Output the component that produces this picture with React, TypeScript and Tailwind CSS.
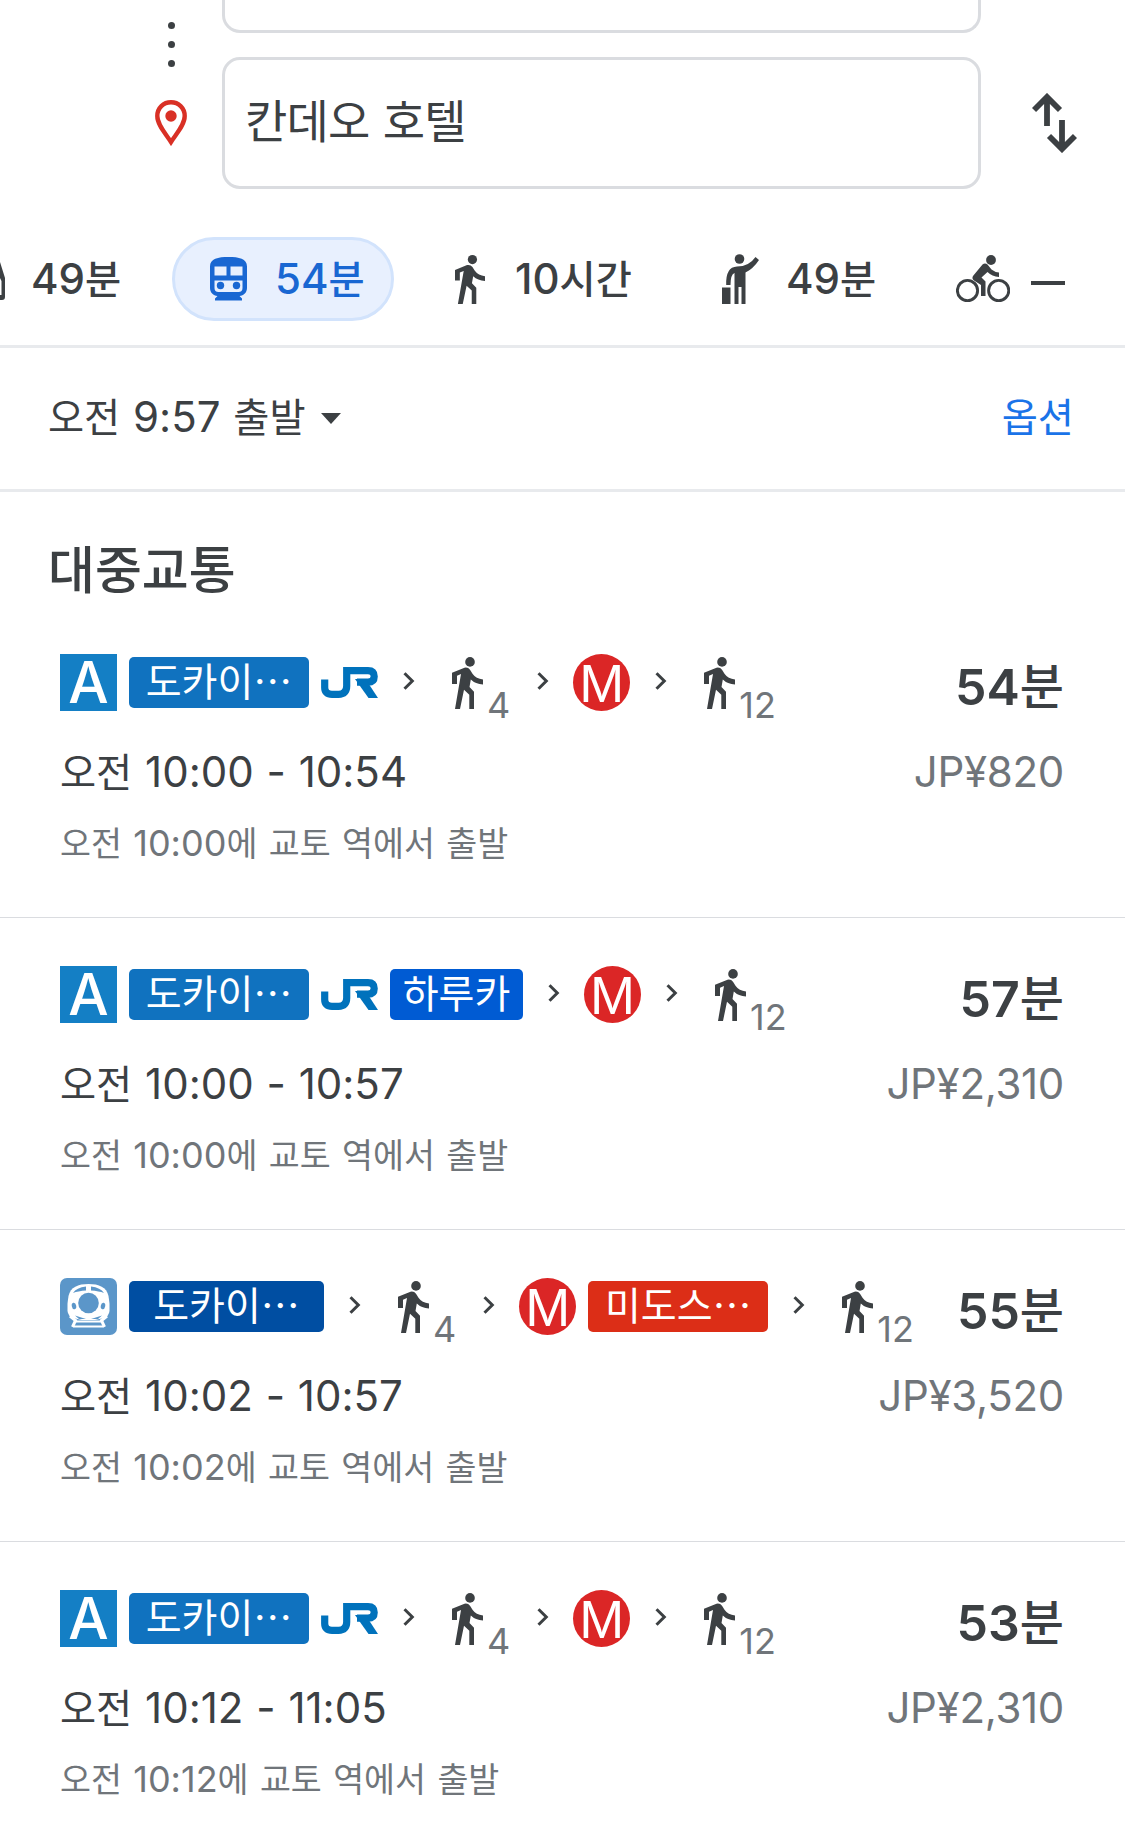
import React from 'react';

interface Badge {
  kind: 'a' | 'jr' | 'metro' | 'train' | 'chip' | 'walk' | 'next';
  label?: string;
  className?: string;
}

interface Route {
  steps: Badge[];
  duration: string;
  start: string;
  end: string;
  fare: string;
}

// Hangul is set a little smaller than the digits beside it
const Ko = ({ children }: { children: React.ReactNode }) => <span className="text-[0.935em]">{children}</span>;

const WalkIcon = ({ className }: { className: string }) => (
  <svg viewBox="0 0 31 51" preserveAspectRatio="none" fill="currentColor" className={className}>
    <circle cx="18" cy="4.8" r="4.8" />
    <path d="M0 15.5 L12.5 10.5 Q16 9.8 18 12.5 L20.5 16.5 Q24 21.5 31 22 V27 Q23.5 26.5 18.8 22 L17.5 29.5 L22 34 V51 H17.3 V37 L12 32 L8 51 H3 L9 16.7 L5 18.3 V26.5 H0 Z" />
  </svg>
);

const TrainIcon = () => (
  <svg viewBox="0 0 37 44" className="h-[44px] w-[37px] shrink-0" fill="none">
    <path fill="#1967d2" fillRule="evenodd" d="M18.500 0C8 0 0 1.500 0 9.500V31c0 4.500 3.300 7.500 7.500 8L5 41.500V43.500H32V41.500L29.500 39c4.200-.5 7.500-3.500 7.500-8V9.500C37 1.500 29 0 18.500 0ZM4.500 9.500V18.500H16.500V9.500ZM20.500 9.500V18.500H32.500V9.500ZM4.500 23.500V31q0 4 4 4H28.500q4 0 4-4V23.500Z" />
    <circle cx="10.500" cy="28.500" r="3.700" fill="#1967d2" />
    <circle cx="26.500" cy="28.500" r="3.700" fill="#1967d2" />
  </svg>
);

const HailIcon = () => (
  <svg viewBox="0 0 37 50" className="h-[50px] w-[37px] shrink-0" fill="currentColor">
    <circle cx="17.500" cy="5" r="4.800" />
    <path d="M33.500 3L37 6Q31 15 23.500 18.500V50H19.500V33H16.500V50H12.500V19Q8.500 20.500 8.500 31H4.200Q3.500 13 15 12.500Q27 12.500 33.500 3Z" />
    <path d="M0 33.500H8.500V50H0Z" />
  </svg>
);

const BikeIcon = () => (
  <svg viewBox="0 0 54 48" className="h-[48px] w-[54px] shrink-0" fill="currentColor">
    <circle cx="35" cy="5" r="4.900" />
    <circle cx="11.500" cy="35.500" r="10.100" fill="none" stroke="currentColor" strokeWidth="2.900" />
    <circle cx="42.700" cy="35.500" r="10.100" fill="none" stroke="currentColor" strokeWidth="2.900" />
    <path d="M17 21L26.500 9.500Q29 7.500 31.500 9.500L35.500 14.500Q38.500 17 43 17.500V22Q36 21.500 31.500 17L25.500 22.500L29.500 26.500V41H25V30L18 25.500Q15.500 23.500 17 21Z" />
  </svg>
);

const SwapIcon = () => (
  <svg viewBox="0 0 45 60" className="h-[60px] w-[45px]" fill="none" stroke="currentColor" strokeWidth="5.800">
    <path d="M15 33V4M2 17L15 4L28 17" />
    <path d="M30 27V56M17 43L30 56L43 43" />
  </svg>
);

const PinIcon = () => (
  <svg viewBox="0 0 32 46" className="h-[46px] w-[32px]" fill="none">
    <path d="M16 2.300C8.500 2.300 2.300 8 2.300 16C2.300 25 11 34 16 42C21 34 29.700 25 29.700 16C29.700 8 23.500 2.300 16 2.300Z" stroke="#d93025" strokeWidth="4.400" />
    <circle cx="16" cy="16" r="5.700" fill="#d93025" />
  </svg>
);

const JrLogo = () => (
  <svg viewBox="0 0 57 31" className="h-[31px] w-[57px] shrink-0" fill="none">
    <path stroke="#0072bc" strokeWidth="7.200" d="M3.700 12.500V20.500Q3.700 27.300 11 27.300H17.500Q25.700 27.300 25.700 19V3.600H47Q53.200 3.600 53.200 9.500Q53.200 15.200 47 15.200H36" />
    <path fill="#0072bc" d="M34 12H44.500L57 31H47.500Z" />
  </svg>
);

const ExpressIcon = () => (
  <svg viewBox="0 0 57 57" className="size-[57px] shrink-0">
    <rect width="57" height="57" rx="7" fill="#5b96c9" />
    <path fill="#fff" d="M28.500 6C18 6 10.500 9 8.500 18Q7 25 7.500 33Q8 38 13 40L22 42H35L44 40Q49 38 49.500 33Q50 25 48.500 18C46.500 9 39 6 28.500 6Z" />
    <circle cx="28.500" cy="25" r="10.300" fill="#5b96c9" />
    <path fill="#5b96c9" d="M26 8.500V12.500Q18 13 13 15Q16.500 9.500 26 8.500ZM31 8.500V12.500Q39 13 44 15Q40.500 9.500 31 8.500Z" />
    <ellipse cx="14" cy="28" rx="2.200" ry="3.300" fill="#5b96c9" transform="rotate(-12 14 28)" />
    <ellipse cx="43" cy="28" rx="2.200" ry="3.300" fill="#5b96c9" transform="rotate(12 43 28)" />
    <path fill="#5b96c9" d="M15 37.500L26 41H19ZM42 37.500L31 41H38Z" />
    <path d="M10 38L15.500 42.500L12.500 49M47 38L41.500 42.500L44.500 49" fill="none" stroke="#fff" strokeWidth="3" />
    <path d="M15 43.500H42M14 48.500H43" stroke="#fff" strokeWidth="2.200" />
  </svg>
);

const Step = ({ kind, label, className = '' }: Badge) => {
  if (kind === 'a') {
    return (
      <span className="flex size-[57px] shrink-0 items-center justify-center bg-[#147fc5] text-[57px] leading-none font-medium text-white">
        A
      </span>
    );
  }
  if (kind === 'metro') {
    return (
      <span className="flex size-[57px] shrink-0 items-center justify-center rounded-full bg-[#db2626] font-['Liberation_Sans',sans-serif] text-[54px] leading-none text-white">
        M
      </span>
    );
  }
  if (kind === 'jr') return <JrLogo />;
  if (kind === 'train') return <ExpressIcon />;
  if (kind === 'next') {
    return (
      <svg viewBox="0 0 12 18" className="-mt-1 mr-3 ml-[13px] h-[18px] w-[12px] shrink-0" fill="none" stroke="#3c4043" strokeWidth="3">
        <path d="M1.500 1.200L9.300 9L1.500 16.800" />
      </svg>
    );
  }
  if (kind === 'walk') {
    return (
      <span className="flex h-[57px] shrink-0 items-start pr-[2px] pl-[13px]">
        <WalkIcon className="mt-[3px] h-[52px] w-[31px]" />
        <span className="mt-[33px] ml-[4px] text-[36px] leading-[36px] text-[#70757a]">{label}</span>
      </span>
    );
  }
  return (
    <span className={`flex h-[51px] shrink-0 items-center justify-center rounded-[5px] text-[39px] leading-none text-white ${className}`}>
      <span className="-mt-[3px]">{label}</span>
    </span>
  );
};

const RouteCard = ({ route }: { route: Route }) => (
  <li className="h-[312px] border-b border-[#dadce0] pt-[48px] pr-[61px] pl-[60px]">
    <div className="flex h-[57px] items-center justify-between">
      <div className="flex items-center gap-3">
        {route.steps.map((step, i) => (
          <Step key={i} {...step} />
        ))}
      </div>
      <div className="mt-2 flex items-center text-[50px] leading-none font-semibold">
        {route.duration}
        <span className="text-[48px] font-medium">분</span>
      </div>
    </div>
    <div className="mt-[36px] flex h-[50px] items-center justify-between text-[42px] leading-none">
      <span className="[word-spacing:1px]">
        <Ko>오전</Ko> {route.start} - {route.end}
      </span>
      <span className="tracking-[-0.3px] text-[#70757a]">JP¥{route.fare}</span>
    </div>
    <p className="mt-[24px] h-[44px] text-[36px] leading-[44px] text-[#70757a] [word-spacing:1.2px]">
      <Ko>오전</Ko> {route.start}
      <Ko>에</Ko> <Ko>교토</Ko> <Ko>역에서</Ko> <Ko>출발</Ko>
    </p>
  </li>
);

const tokaido = { kind: 'chip', label: '도카이⋯', className: 'w-[180px] bg-[#1072bf]' } as Badge;

const localSteps: Badge[] = [
  { kind: 'a' },
  tokaido,
  { kind: 'jr' },
  { kind: 'next' },
  { kind: 'walk', label: '4' },
  { kind: 'next' },
  { kind: 'metro' },
  { kind: 'next' },
  { kind: 'walk', label: '12' },
];

const routes: Route[] = [
  { steps: localSteps, duration: '54', start: '10:00', end: '10:54', fare: '820' },
  {
    steps: [
      { kind: 'a' },
      tokaido,
      { kind: 'jr' },
      { kind: 'chip', label: '하루카', className: 'w-[133px] bg-[#005bd3]' },
      { kind: 'next' },
      { kind: 'metro' },
      { kind: 'next' },
      { kind: 'walk', label: '12' },
    ],
    duration: '57',
    start: '10:00',
    end: '10:57',
    fare: '2,310',
  },
  {
    steps: [
      { kind: 'train' },
      { kind: 'chip', label: '도카이⋯', className: 'w-[195px] bg-[#004ea2]' },
      { kind: 'next' },
      { kind: 'walk', label: '4' },
      { kind: 'next' },
      { kind: 'metro' },
      { kind: 'chip', label: '미도스⋯', className: 'w-[180px] bg-[#dc2e17]' },
      { kind: 'next' },
      { kind: 'walk', label: '12' },
    ],
    duration: '55',
    start: '10:02',
    end: '10:57',
    fare: '3,520',
  },
  { steps: localSteps, duration: '53', start: '10:12', end: '11:05', fare: '2,310' },
];

const App: React.FC = () => {
  return (
    <main className="h-[1836px] w-[1125px] overflow-hidden bg-white font-['Inter','Noto_Sans_CJK_KR',sans-serif] text-[#3c4043]">
      <header className="flex h-[237px] items-start">
        <div className="flex w-[222px] flex-col items-end pt-[22px] pr-[35px]">
          <div className="flex w-[32px] flex-col items-center gap-3">
            <i className="size-[7px] rounded-full bg-[#3c4043]" />
            <i className="size-[7px] rounded-full bg-[#3c4043]" />
            <i className="size-[7px] rounded-full bg-[#3c4043]" />
          </div>
          <div className="mt-[33px]">
            <PinIcon />
          </div>
        </div>
        <div className="w-[759px]">
          <div className="h-[33px] rounded-b-[18px] border-[3px] border-t-0 border-[#dadce0]" />
          <div className="mt-6 flex h-[132px] items-center rounded-[18px] border-[3px] border-[#dadce0] pl-[20px] text-[46px] leading-none">
            <span className="-mt-1 tracking-[-0.8px] [word-spacing:1px]">칸데오 호텔</span>
          </div>
        </div>
        <div className="mt-[93px] ml-[51px]">
          <SwapIcon />
        </div>
      </header>

      <nav className="flex h-[111px] items-start border-b-[3px] border-[#e8eaed] text-[42px] leading-none font-medium">
        <div className="flex h-[84px] w-[172px] items-center">
          <svg viewBox="0 0 6 38" className="mt-1 h-[38px] w-[6px]">
            <path d="M0 0L5 16V35Q5 38 2 38H0V33H1.500V19L0 16Z" fill="#3c4043" />
          </svg>
          <span className="ml-[25px]">
            49<Ko>분</Ko>
          </span>
        </div>
        <div className="flex h-[84px] w-[222px] items-center rounded-full border-[3px] border-[#d2e3fc] bg-[#e8f0fe] pl-[35px] text-[#1967d2]">
          <TrainIcon />
          <span className="ml-[28px]">
            54<Ko>분</Ko>
          </span>
        </div>
        <div className="ml-[61px] flex h-[84px] w-[267px] items-center">
          <WalkIcon className="h-[49px] w-[30px]" />
          <span className="ml-[30px]">
            10<Ko>시간</Ko>
          </span>
        </div>
        <div className="flex h-[84px] w-[234px] items-center">
          <HailIcon />
          <span className="ml-[27px]">
            49<Ko>분</Ko>
          </span>
        </div>
        <div className="flex h-[84px] items-center">
          <BikeIcon />
          <span className="mt-[7px] ml-[21px] h-1 w-[34px] bg-[#3c4043]" />
        </div>
      </nav>

      <section className="flex h-[144px] items-center justify-between border-b-[3px] border-[#e8eaed] pr-[51px] pb-1 pl-[48px] text-[42px] leading-none">
        <div className="flex items-center">
          <span className="[word-spacing:1px]">
            <Ko>오전</Ko> 9:57 <Ko>출발</Ko>
          </span>
          <span className="mt-1 ml-[15px] border-x-[10px] border-t-[11px] border-x-transparent border-t-[#3c4043]" />
        </div>
        <span className="text-[#1a73e8]">
          <Ko>옵션</Ko>
        </span>
      </section>

      <section>
        <h2 className="h-[114px] pt-[49px] pl-[48px] text-[51px] leading-[60px] font-medium">대중교통</h2>
        <ul>
          {routes.map((route, i) => (
            <RouteCard key={i} route={route} />
          ))}
        </ul>
      </section>
    </main>
  );
};

export default App;
